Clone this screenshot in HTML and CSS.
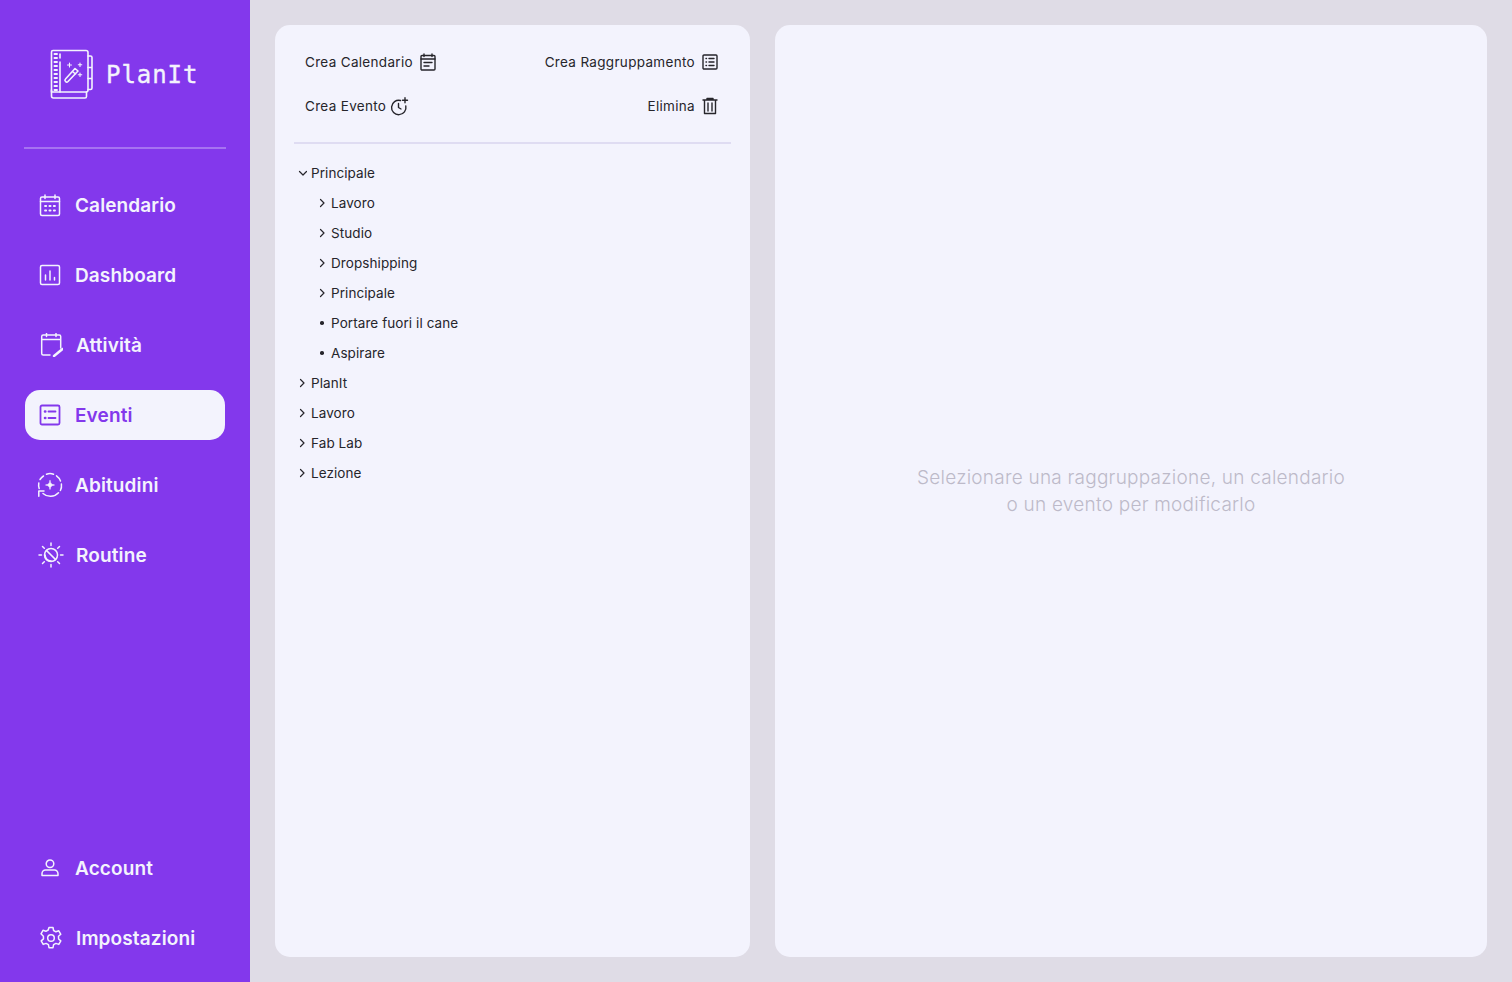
FILE: index.html
```html
<!DOCTYPE html>
<html lang="it">
<head>
<meta charset="utf-8">
<title>PlanIt</title>
<link rel="stylesheet" href="styles.css">
</head>
<body>
<div class="app">
  <aside class="sidebar">
    <div class="top">
      <div class="logo">
        <svg class="logo-icon" viewBox="49 49 44 50" fill="none" stroke="currentColor" stroke-width="1.600" stroke-linecap="round" stroke-linejoin="round">
          <path d="M53 50.500h33a2 2 0 0 1 2 2V90a2 2 0 0 1-2 2H51.500V52a1.500 1.500 0 0 1 1.500-1.500z"/>
          <path d="M51.500 90v6a2 2 0 0 0 2 2H85a1.500 1.500 0 0 0 1.500-1.500V92"/>
          <path d="M60 62V92M60 54v4"/>
          <path d="M54.500 54h2.500M54.500 58h2.500M54.500 62h2.500M54.500 66h2.500M54.500 70h2.500M54.500 74h2.500M54.500 78h2.500M54.500 82h2.500M54.500 86h2.500M54.500 90h2.500" stroke-width="1.900"/>
          <path d="M88 56h2.500a1.500 1.500 0 0 1 1.500 1.500V88a1.500 1.500 0 0 1-1.500 1.500H88M88 67.500h4M88 78.500h4"/>
          <path d="M65.500 79l9.500-10.500 3 2.500-10 10.500a1.500 1.500 0 0 1-2.500-2.500zM72.500 71.500l3 2.500"/>
          <path d="M69.500 63v4M67.500 65h4M80 63v3.500M78.300 64.800h3.500M80 73v3.500M78.300 74.800h3.500" stroke-width="1.100"/>
        </svg>
        <span class="brand">PlanIt</span>
      </div>
      <hr class="rule">
      <nav class="nav">
        <a class="item">
          <span class="slot"><svg class="ic" width="22" height="23" viewBox="0 0 22 23" fill="none" stroke="currentColor" stroke-width="1.500" stroke-linecap="round" stroke-linejoin="round"><rect x="1.500" y="3" width="19" height="18.500" rx="1.500"/><path d="M1.500 7.500h19M6 1v3.500M16 1v3.500"/><path d="M6 12h1.200M10.400 12h1.200M14.800 12h1.200M6 16.500h1.200M10.400 16.500h1.200M14.800 16.500h1.200" stroke-width="1.800"/></svg></span>
          <span class="label">Calendario</span>
        </a>
        <a class="item">
          <span class="slot"><svg class="ic" width="22" height="22" viewBox="0 0 22 22" fill="none" stroke="currentColor" stroke-width="1.500" stroke-linecap="round" stroke-linejoin="round"><rect x="1.500" y="1.500" width="19" height="19" rx="1.500"/><path d="M6.500 16v-5M11 16V7M15.500 16v-2.500"/></svg></span>
          <span class="label">Dashboard</span>
        </a>
        <a class="item item-shift">
          <span class="slot"><svg class="ic" width="24" height="24" viewBox="0 0 24 24" fill="none" stroke="currentColor" stroke-width="1.500" stroke-linecap="round" stroke-linejoin="round"><path d="M11 22H4.200a1.500 1.500 0 0 1-1.500-1.500V3.500A1.500 1.500 0 0 1 4.200 2h16a1.500 1.500 0 0 1 1.500 1.500V15M2.700 6.500h19M7.500 .5v3M17 .5v3"/><path d="M15 23l8.500-7" stroke-width="2.400"/></svg></span>
          <span class="label">Attività</span>
        </a>
        <a class="item active">
          <span class="slot"><svg class="ic" width="22" height="22" viewBox="0 0 22 22" fill="none" stroke="currentColor" stroke-width="1.800" stroke-linecap="round" stroke-linejoin="round"><rect x="1.500" y="1.500" width="19" height="19" rx="1.500"/><path d="M9.500 7.500H16.500M9.500 14H16.500"/><path d="M6 7.500h.3M6 14h.3" stroke-width="2.600"/></svg></span>
          <span class="label">Eventi</span>
        </a>
        <a class="item">
          <span class="slot"><svg class="ic" width="26" height="26" viewBox="0 0 26 26" fill="none" stroke="currentColor" stroke-width="1.500" stroke-linecap="round" stroke-linejoin="round"><path d="M9.500 2.200a11 11 0 0 1 7 0M19.500 3.800a11 11 0 0 1 4 5.200M24.400 12a11 11 0 0 1-1 6.500M21.500 20.800A11 11 0 0 1 6 21.500M2.200 16.500A11 11 0 0 1 1.800 11M3 7.500a11 11 0 0 1 3.500-3.500"/><path d="M1.800 24.200V19h5.200"/><path d="M13 8.500c.5 3 1.500 4 4.500 4.500-3 .5-4 1.500-4.500 4.500-.5-3-1.500-4-4.500-4.500 3-.5 4-1.500 4.500-4.500z" fill="currentColor" stroke-width=".6"/></svg></span>
          <span class="label">Abitudini</span>
        </a>
        <a class="item item-shift">
          <span class="slot"><svg class="ic" width="26" height="26" viewBox="0 0 26 26" fill="none" stroke="currentColor" stroke-width="1.500" stroke-linecap="round" stroke-linejoin="round"><circle cx="13" cy="13" r="6.500"/><path d="M8.500 8.500l9 9M7 13a6.500 6.500 0 0 0 6 6" stroke-width="1.700"/><path d="M13 1v2.500M13 22.500V25M1 13h2.500M22.500 13H25M4.500 4.500l1.800 1.800M19.700 19.700l1.800 1.800M4.500 21.500l1.800-1.800M19.700 6.300l1.800-1.800"/></svg></span>
          <span class="label">Routine</span>
        </a>
      </nav>
    </div>
    <div class="bottom">
      <a class="item">
        <span class="slot"><svg class="ic" width="20" height="18" viewBox="0 0 20 18" fill="none" stroke="currentColor" stroke-width="1.500" stroke-linecap="round" stroke-linejoin="round"><circle cx="10" cy="4.800" r="3.800"/><path d="M2 16.500v-2a3.500 3.500 0 0 1 3.500-3.500h9a3.500 3.500 0 0 1 3.500 3.500v2z"/></svg></span>
        <span class="label">Account</span>
      </a>
      <a class="item item-shift">
        <span class="slot"><svg class="ic" width="24" height="24" viewBox="0 0 24 24" fill="none" stroke="currentColor" stroke-width="1.500" stroke-linecap="round" stroke-linejoin="round"><circle cx="12" cy="12" r="3.300"/><path d="M10 1.500h4l.6 3 2.300 1.300 2.900-1 2 3.500-2.300 2 .1 2.700 2.200 1.900-2 3.500-2.900-1-2.300 1.300-.6 3h-4l-.6-3-2.300-1.300-2.900 1-2-3.500 2.300-2-.1-2.700L2 7.800l2-3.500 2.900 1 2.300-1.300z"/></svg></span>
        <span class="label">Impostazioni</span>
      </a>
    </div>
  </aside>

  <main class="content">
    <section class="panel list-panel">
      <div class="toolbar">
        <button class="tool">
          <span>Crea Calendario</span>
          <svg width="18" height="18" viewBox="0 0 18 18" fill="none" stroke="currentColor" stroke-width="1.400" stroke-linecap="round" stroke-linejoin="round"><rect x="2" y="2.500" width="14" height="14.500" rx="1"/><path d="M2 6h14M5 1v2.500M13 1v2.500M5 9.500h8M5 13h5"/></svg>
        </button>
        <button class="tool tool-right">
          <span>Crea Raggruppamento</span>
          <svg width="18" height="18" viewBox="0 0 18 18" fill="none" stroke="currentColor" stroke-width="1.400" stroke-linecap="round" stroke-linejoin="round"><rect x="2" y="2" width="14" height="14" rx="1"/><path d="M8 5.500h5M8 9h5M8 12.500h5M5 5.500h.5M5 9h.5M5 12.500h.5"/></svg>
        </button>
        <button class="tool">
          <span>Crea Evento</span>
          <svg class="tool-clock" width="19" height="19" viewBox="0 0 19 19" fill="none" stroke="currentColor" stroke-width="1.400" stroke-linecap="round" stroke-linejoin="round"><path d="M10.500 3.500A7.200 7.200 0 1 0 15.800 9"/><path d="M8.500 6.500v4l2.500 1.500"/><path d="M15 .8v5M12.500 3.300h5"/></svg>
        </button>
        <button class="tool tool-right">
          <span>Elimina</span>
          <svg width="18" height="18" viewBox="0 0 18 18" fill="none" stroke="currentColor" stroke-width="1.400" stroke-linecap="round" stroke-linejoin="round"><path d="M2 3h14M6 3V1.500h6V3M3.500 3v13.500h11V3M7 6v8M11 6v8"/></svg>
        </button>
      </div>
      <hr class="divider">
      <ul class="tree">
        <li class="node"><svg class="mark" viewBox="0 0 10 10"><path d="M2.500 3.500L6 7l3.500-3.500"/></svg>Principale</li>
        <li class="node child"><svg class="mark" viewBox="0 0 10 10"><path d="M3.500 1.500L7 5 3.500 8.500"/></svg>Lavoro</li>
        <li class="node child"><svg class="mark" viewBox="0 0 10 10"><path d="M3.500 1.500L7 5 3.500 8.500"/></svg>Studio</li>
        <li class="node child"><svg class="mark" viewBox="0 0 10 10"><path d="M3.500 1.500L7 5 3.500 8.500"/></svg>Dropshipping</li>
        <li class="node child"><svg class="mark" viewBox="0 0 10 10"><path d="M3.500 1.500L7 5 3.500 8.500"/></svg>Principale</li>
        <li class="node child"><span class="dot"></span>Portare fuori il cane</li>
        <li class="node child"><span class="dot"></span>Aspirare</li>
        <li class="node"><svg class="mark" viewBox="0 0 10 10"><path d="M3.500 1.500L7 5 3.500 8.500"/></svg>PlanIt</li>
        <li class="node"><svg class="mark" viewBox="0 0 10 10"><path d="M3.500 1.500L7 5 3.500 8.500"/></svg>Lavoro</li>
        <li class="node"><svg class="mark" viewBox="0 0 10 10"><path d="M3.500 1.500L7 5 3.500 8.500"/></svg>Fab Lab</li>
        <li class="node"><svg class="mark" viewBox="0 0 10 10"><path d="M3.500 1.500L7 5 3.500 8.500"/></svg>Lezione</li>
      </ul>
    </section>
    <section class="panel detail-panel">
      <p class="hint">Selezionare una raggruppazione, un calendario<br>o un evento per modificarlo</p>
    </section>
  </main>
</div>
</body>
</html>
```

FILE: styles.css
```css
* { box-sizing: border-box; }
html, body { margin: 0; height: 100%; }
body {
  font-family: Inter, "Noto Sans", "Liberation Sans", sans-serif;
  background: #dfdce6;
  color: #26252b;
}
.app { display: flex; height: 982px; overflow: hidden; }

.sidebar {
  width: 250px;
  flex: none;
  background: #8338ec;
  color: #f3f3fd;
  display: flex;
  flex-direction: column;
  justify-content: space-between;
  padding: 0 25px 19px;
}
.logo {
  height: 147px;
  padding: 49px 0 0 24px;
  display: flex;
  align-items: flex-start;
  gap: 13px;
}
.logo-icon { width: 44px; height: 50px; flex: none; }
.brand {
  font-family: "DejaVu Sans Mono", monospace;
  font-size: 24px;
  letter-spacing: .95px;
  line-height: 50px;
  margin: 1px 0 0 0;
  -webkit-text-stroke: .35px currentColor;
}
.rule {
  border: 0;
  height: 2px;
  margin: 0 -1px 31px;
  background: #a673f1;
}
.nav { display: flex; flex-direction: column; gap: 20px; }
.bottom { display: flex; flex-direction: column; gap: 20px; }
.item {
  height: 50px;
  display: flex;
  align-items: center;
  gap: 12px;
  padding-left: 12px;
  border-radius: 15px;
  font-size: 19px;
  font-weight: 600;
  letter-spacing: .12px;
}
.item-shift { padding-left: 13px; }
.item.active { background: #f3f3fd; color: #8338ec; }
.slot { width: 26px; height: 26px; display: flex; align-items: center; justify-content: center; flex: none; }
.ic { display: block; }

.content { flex: 1; display: flex; gap: 25px; padding: 25px; min-width: 0; }
.panel { background: #f3f3fd; border-radius: 15px; }
.list-panel { width: 475px; flex: none; padding: 15px 19px; }
.detail-panel { flex: 1; display: flex; align-items: center; justify-content: center; }

.toolbar {
  display: grid;
  grid-template-columns: 1fr 1fr;
  grid-auto-rows: 44px;
  padding: 0 12px 0 11px;
}
.tool {
  border: 0;
  padding: 0;
  background: none;
  font: inherit;
  font-size: 13.500px;
  letter-spacing: .32px;
  color: inherit;
  display: flex;
  align-items: center;
  gap: 6px;
}
.tool-right { justify-content: flex-end; }
.tool-clock { margin-left: -2px; }
.divider { border: 0; height: 2px; margin: 14px 0 14px; background: #dfdcf2; }

.tree { list-style: none; margin: 0; padding: 0; }
.node {
  height: 30px;
  display: flex;
  align-items: center;
  font-size: 13.500px;
  letter-spacing: .08px;
  padding-left: 3px;
}
.node.child { padding-left: 23px; }
.mark {
  width: 10px;
  height: 10px;
  margin-right: 4px;
  flex: none;
  fill: none;
  stroke: currentColor;
  stroke-width: 1.200;
  stroke-linecap: round;
  stroke-linejoin: round;
}
.dot {
  width: 3.500px;
  height: 3.500px;
  border-radius: 50%;
  background: currentColor;
  margin: 0 7.500px 0 3px;
  flex: none;
}
.hint {
  margin: 0;
  text-align: center;
  font-size: 19px;
  font-weight: 300;
  letter-spacing: .23px;
  line-height: 27px;
  color: #bdbac9;
}
```
